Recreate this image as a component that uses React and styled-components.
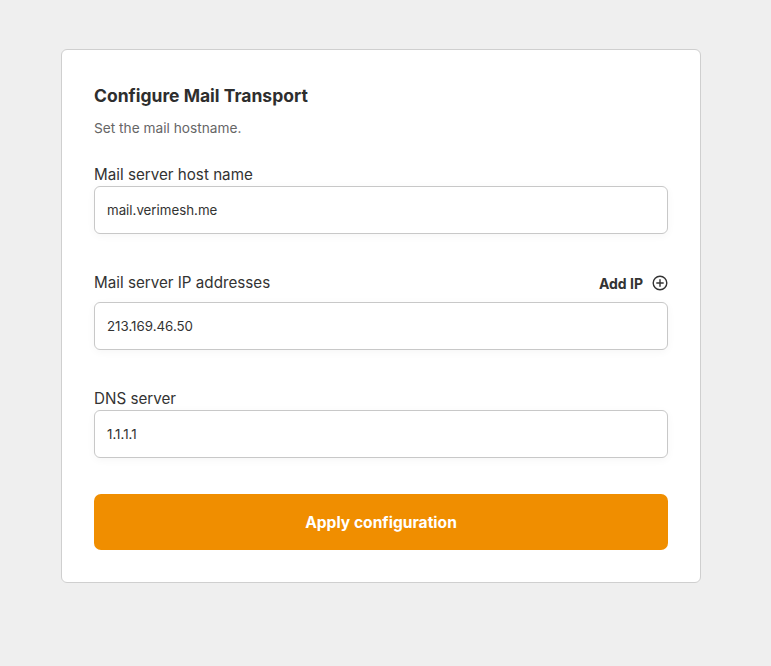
import React from "react";
import styled, { createGlobalStyle } from "styled-components";

const Global = createGlobalStyle`
  html, body { margin: 0; padding: 0; background: #efefef; }
  body { font-family: Inter, "Noto Sans", sans-serif; color: #333; }
  * { box-sizing: border-box; }
`;

const Page = styled.div`
  min-height: 666px;
  padding: 49px 0 0 61px;
`;

const Card = styled.div`
  width: 640px;
  background: #fff;
  border: 1px solid #cfcfcf;
  border-radius: 6px;
  padding: 32px;
  display: flex;
  flex-direction: column;
`;

const Title = styled.h1`
  margin: 0;
  font-size: 17.5px;
  line-height: 28px;
  font-weight: 700;
  color: #2e2e2e;
`;

const Subtitle = styled.p`
  margin: 8px 0 0;
  font-size: 13.7px;
  line-height: 20px;
  color: #666;
`;

const Field = styled.div`
  display: flex;
  flex-direction: column;
  margin-top: ${(p) => p.$mt}px;
`;

const LabelRow = styled.div`
  display: flex;
  align-items: center;
  justify-content: space-between;
  margin-bottom: ${(p) => p.$gap}px;
`;

const Label = styled.label`
  font-size: 15.2px;
  line-height: 22px;
  color: #333;
`;

const AddButton = styled.button`
  display: flex;
  align-items: center;
  gap: 9px;
  border: none;
  background: none;
  padding: 0;
  font-family: inherit;
  font-size: 14px;
  font-weight: 700;
  color: #333;
  cursor: pointer;
`;

const Input = styled.input`
  height: 48px;
  width: 100%;
  border: 1px solid #c8c8c8;
  border-radius: 6px;
  padding: 0 12px;
  font-family: inherit;
  font-size: 13.3px;
  color: #333;
  background: #fff;
  box-shadow: 0 2px 8px rgba(0, 0, 0, 0.04);
  outline: none;
`;

const Submit = styled.button`
  margin-top: 36px;
  height: 56px;
  border: none;
  border-radius: 7px;
  background: #f08e00;
  color: #fff;
  font-family: inherit;
  font-size: 15.6px;
  font-weight: 700;
  cursor: pointer;
`;

const PlusCircle = () => (
  <svg width="16" height="16" viewBox="0 0 16 16" fill="none" stroke="#333" strokeWidth="1.4" strokeLinecap="round">
    <circle cx="8" cy="8" r="6.8" />
    <path d="M8 4.8v6.4M4.8 8h6.4" />
  </svg>
);

export default function App() {
  return (
    <>
      <Global />
      <Page>
        <Card>
          <Title>Configure Mail Transport</Title>
          <Subtitle>Set the mail hostname.</Subtitle>
          <Field $mt={26}>
            <LabelRow $gap={0}>
              <Label>Mail server host name</Label>
            </LabelRow>
            <Input defaultValue="mail.verimesh.me" />
          </Field>
          <Field $mt={38}>
            <LabelRow $gap={8}>
              <Label>Mail server IP addresses</Label>
              <AddButton type="button">
                Add IP <PlusCircle />
              </AddButton>
            </LabelRow>
            <Input defaultValue="213.169.46.50" />
          </Field>
          <Field $mt={38}>
            <LabelRow $gap={0}>
              <Label>DNS server</Label>
            </LabelRow>
            <Input defaultValue="1.1.1.1" />
          </Field>
          <Submit type="button">Apply configuration</Submit>
        </Card>
      </Page>
    </>
  );
}
